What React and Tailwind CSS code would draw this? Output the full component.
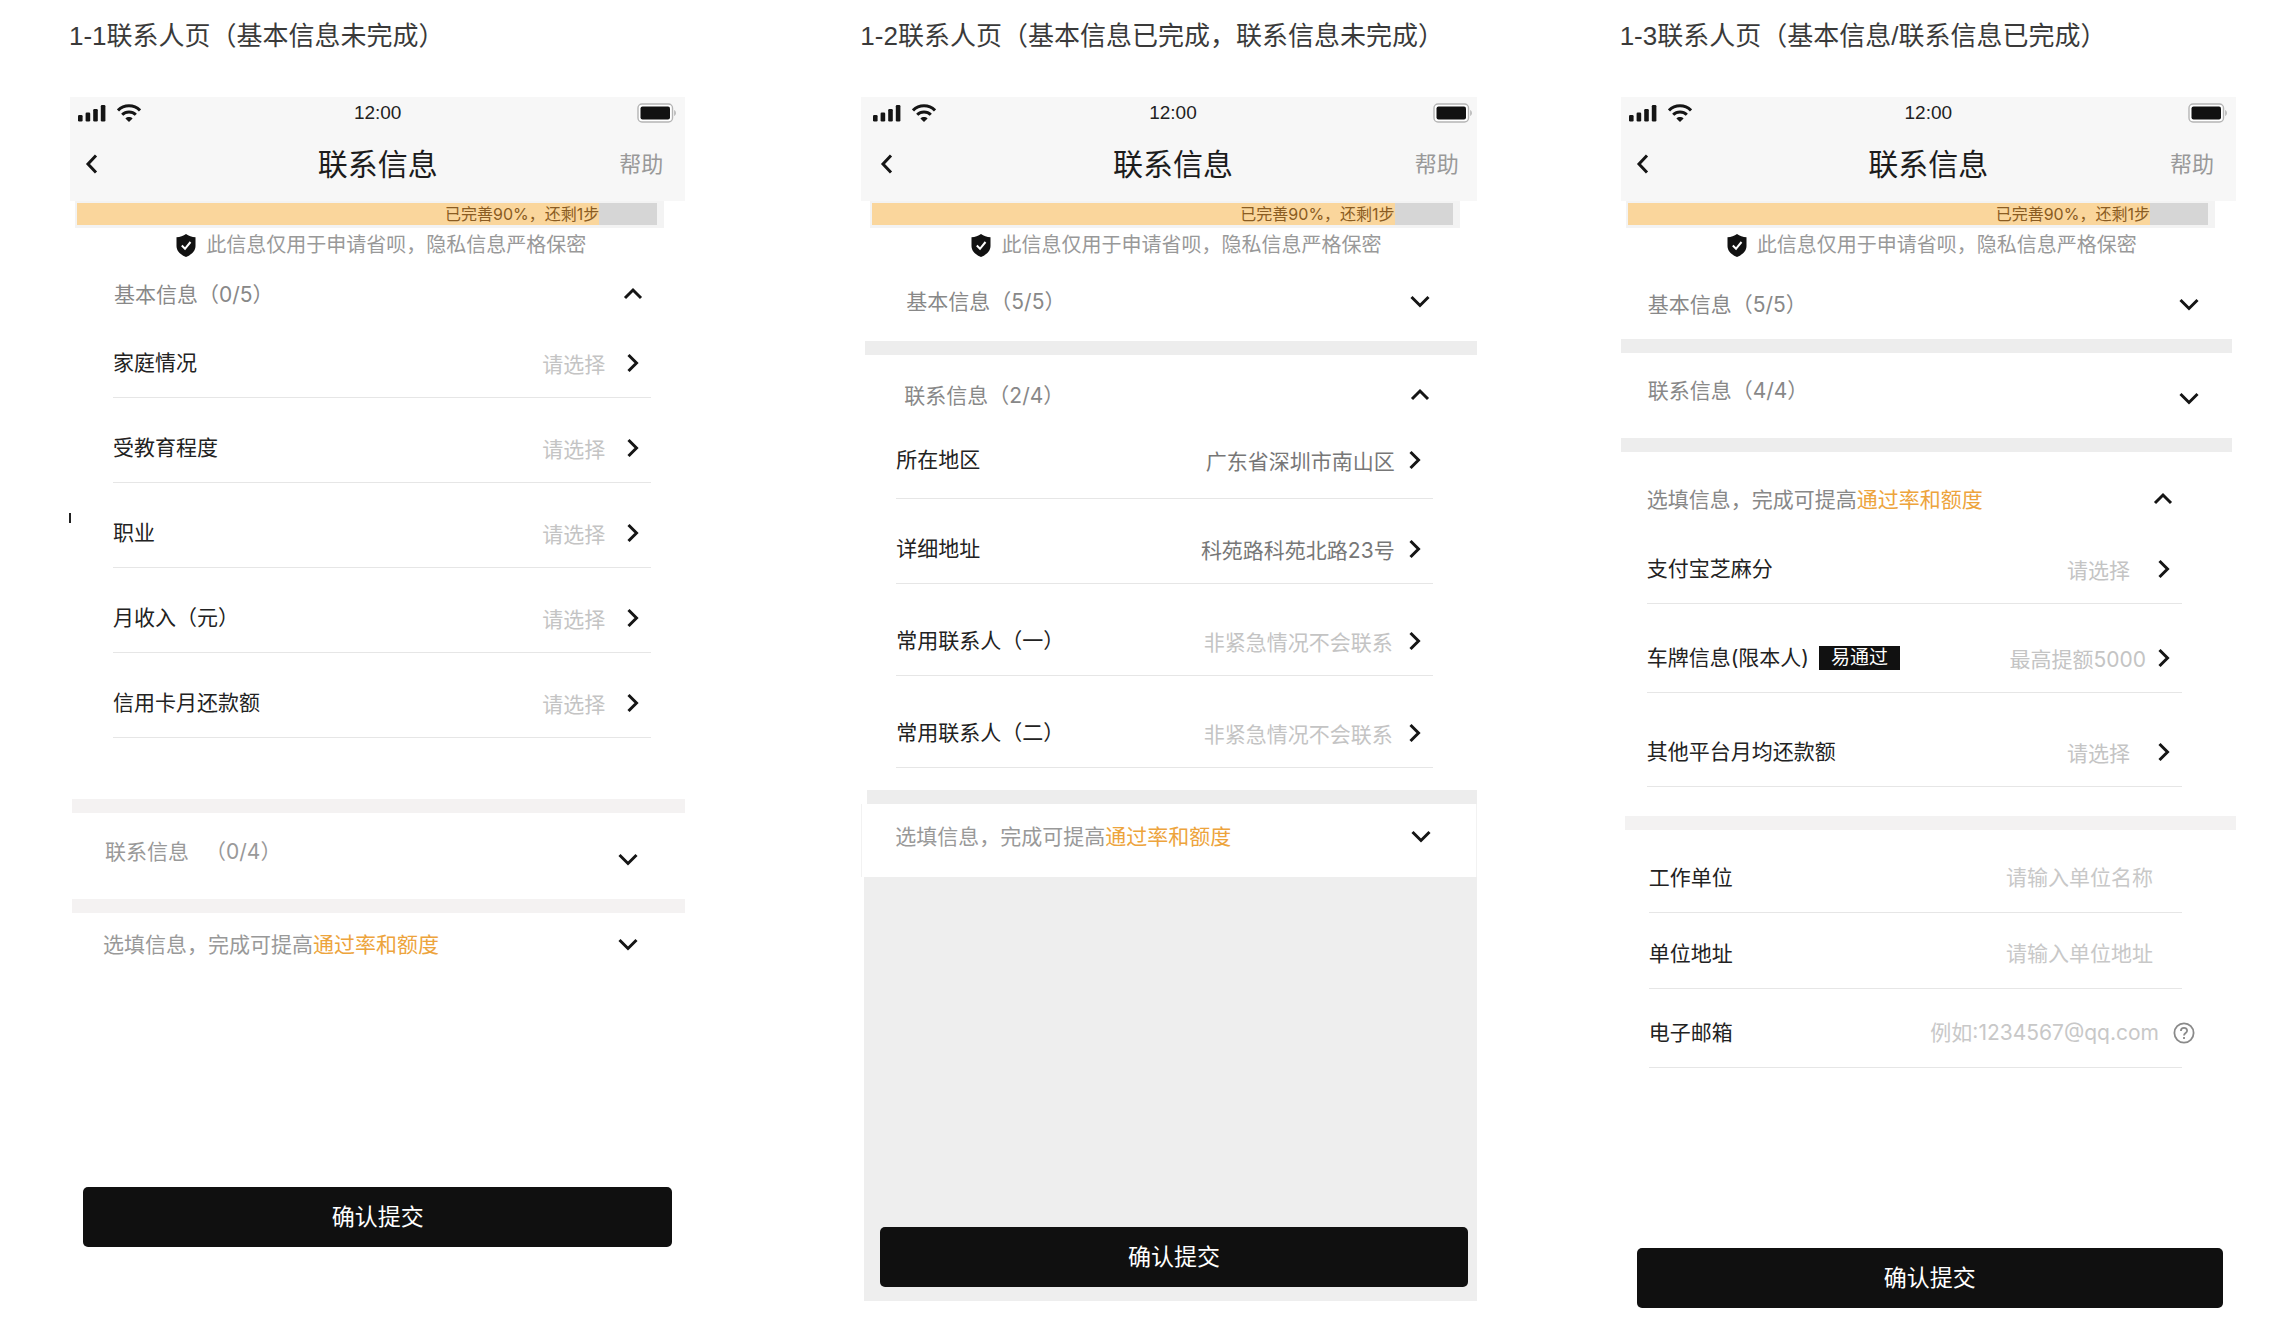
const CHEVRON_PATHS = {
  right: "M5.5 2 L13.5 10 L5.5 18",
  left: "M14 1.500 L6 10 L14 18.500",
  down: "M1.500 6 L10 14.5 L18.500 6",
  up: "M2 14 L10 6 L18 14",
};

function Chevron({ dir, className = "" }) {
  return (
    <svg viewBox="0 0 20 20" className={`h-5 w-5 shrink-0 ${className}`} fill="none" stroke="#151515" strokeWidth="3" aria-hidden="true">
      <path d={CHEVRON_PATHS[dir]} />
    </svg>
  );
}

function StatusBar() {
  return (
    <div className="grid grid-cols-3 items-center px-2 pt-[2px]">
      <div className="flex items-center gap-[11px]">
        <svg viewBox="0 0 28 18" className="h-[18px] w-7" fill="#151515" aria-label="信号">
          <rect x="0" y="11" width="4.6" height="6.5" rx="1.2" />
          <rect x="7.6" y="8.5" width="4.6" height="9" rx="1.2" />
          <rect x="15.2" y="5" width="4.6" height="12.5" rx="1.2" />
          <rect x="22.8" y="1" width="4.6" height="16.5" rx="1.2" />
        </svg>
        <svg viewBox="0 0 24 18" className="h-[18px] w-6" fill="none" stroke="#151515" strokeWidth="3" aria-label="无线网络">
          <path d="M1 6.4 C7 0.2 17 0.2 23 6.4" />
          <path d="M5.2 10.8 C9 7 15 7 18.8 10.8" />
          <path d="M12 18 L8.4 14.4 C10.4 12.5 13.6 12.5 15.6 14.4 Z" fill="#151515" stroke="none" />
        </svg>
      </div>
      <time className="text-center font-['Liberation_Sans'] text-[19px] leading-7 text-[#222]">12:00</time>
      <svg viewBox="0 0 40 20" className="h-5 w-10 justify-self-end" aria-label="电量">
        <rect x="1" y="1" width="34.5" height="18" rx="4" fill="#fff" stroke="#b5b5b5" strokeWidth="1.4" />
        <rect x="3.5" y="3.5" width="29.5" height="13" rx="2" fill="#111" />
        <path d="M37.2 7 C39.4 7.8 39.4 12.2 37.2 13 Z" fill="#b5b5b5" />
      </svg>
    </div>
  );
}

function PhoneHeader({ inset = "" }) {
  return (
    <>
      <header className="bg-[#f7f7f7] pb-[17px]">
        <div className={inset}>
          <StatusBar />
          <div className="grid grid-cols-3 items-center px-3 pt-[17px]">
            <button type="button" aria-label="返回" className="justify-self-start">
              <Chevron dir="left" />
            </button>
            <h2 className="text-center text-[30px] leading-10 text-[#1c1c1c]">联系信息</h2>
            <a href="#help" className="justify-self-end pr-[10px] text-[22px] leading-7 text-[#999]">帮助</a>
          </div>
        </div>
      </header>
      <div className={inset}>
        <div className="mr-[21px] ml-[5px] bg-[#f3f3f3] pt-[2px] pr-[7px] pb-[3px] pl-[2px]">
          <div className="bg-[#d6d6d6]" role="progressbar" aria-label="资料完善度" aria-valuenow={90} aria-valuemin={0} aria-valuemax={100}>
            <p className="w-[90%] bg-[#fad69c] text-right text-base leading-[22px] whitespace-nowrap text-[#8a5c22]">
              已完善90%，还剩1步
            </p>
          </div>
        </div>
        <p className="flex items-center justify-center gap-[10px] py-[3px] pl-[7px] text-xl leading-7 text-[#999]">
          <svg viewBox="0 0 20 23" className="h-[23px] w-5" aria-hidden="true">
            <path d="M10 0 C12.5 2 16 3 19.5 3.2 V12 C19.5 17 15.5 20.8 10 23 C4.500 20.8 0.5 17 0.5 12 V3.200 C4 3 7.500 2 10 0 Z" fill="#111" />
            <path d="M5.800 11.500 L9 14.800 L14.500 8" fill="none" stroke="#fff" strokeWidth="2" />
          </svg>
          此信息仅用于申请省呗，隐私信息严格保密
        </p>
      </div>
    </>
  );
}

function SectionHeader({ title, count, countClass = "", open, low, className, tone = "text-[#888]" }) {
  return (
    <button type="button" aria-expanded={Boolean(open)} className={`flex w-full items-start justify-between text-left text-[21px] leading-7 ${tone} ${className}`}>
      <span>
        {title}
        {count && <span className={countClass}>（{count}）</span>}
      </span>
      <Chevron dir={open ? "up" : "down"} className={low ? "mt-[11px]" : "mt-[3px]"} />
    </button>
  );
}

const OPTIONAL_TITLE = (
  <>
    选填信息，完成可提高<span className="text-[#eda43c]">通过率和额度</span>
  </>
);

function Divider({ className = "bg-[#ededed]" }) {
  return <div className={`h-3.5 ${className}`} />;
}

function SelectRow({ label, badge, value, filled, pad = "pt-9 pb-5", gap = "gap-[18px]" }) {
  return (
    <li className="border-b border-[#e6e6e6]">
      <button type="button" className={`flex w-full items-center justify-between pr-2 text-left text-[21px] leading-7 ${pad}`}>
        <span className="flex items-center gap-[10px] text-[#222]">
          {label}
          {badge && <span className="bg-[#111] px-3 text-[19px] leading-6 text-white">{badge}</span>}
        </span>
        <span className={`flex items-center ${gap}`}>
          <span className={`pt-1 leading-6 ${filled ? "text-[#777]" : "text-[#c4c4c4]"}`}>{value}</span>
          <Chevron dir="right" />
        </span>
      </button>
    </li>
  );
}

function InputRow({ id, label, placeholder, type = "text", pad = "pt-[27px]", help }) {
  return (
    <div className={`flex items-center justify-between border-b border-[#e6e6e6] pb-5 text-[21px] leading-7 ${pad}`}>
      <label htmlFor={id} className="shrink-0 text-[#222]">{label}</label>
      <div className={help ? "-mr-[13px] flex min-w-0 grow items-center gap-3.5" : "flex min-w-0 grow pr-[29px]"}>
        <input
          id={id}
          type={type}
          placeholder={placeholder}
          className="h-7 min-w-0 grow bg-transparent text-right leading-7 outline-none placeholder:text-[#c8c8c8]"
        />
        {help && (
          <button type="button" aria-label="邮箱说明" className="shrink-0">
            <svg viewBox="0 0 22 22" className="h-[22px] w-[22px]" fill="none" stroke="#8a8a8a" strokeWidth="1.800" aria-hidden="true">
              <circle cx="11" cy="11" r="9.600" />
              <path d="M7.900 9 C7.900 4.800 14.100 4.800 14.100 8.700 C14.100 11 11 11 11 13.600" />
              <path d="M11 15 V17" />
            </svg>
          </button>
        )}
      </div>
    </div>
  );
}

function SubmitButton({ className = "mx-[13px]" }) {
  return (
    <div className={`flex ${className}`}>
      <button type="submit" className="grow rounded-[5px] bg-[#101010] py-4 text-[23px] leading-7 text-white">
        确认提交
      </button>
    </div>
  );
}

function Mockup({ heading, inset, className = "", children }) {
  return (
    <section className={`relative min-w-0 flex-1 ${className}`}>
      <h1 className="-ml-px pt-4 pb-[41px] font-['Liberation_Sans','Noto_Sans_CJK_SC',sans-serif] text-[26px] leading-10 whitespace-nowrap text-[#3a3a3a]">
        {heading}
      </h1>
      <form onSubmit={(e) => e.preventDefault()}>
        <PhoneHeader inset={inset} />
        {children}
      </form>
    </section>
  );
}

export default function App() {
  return (
    <main className="flex min-h-screen items-start bg-white pr-[46px] pb-6 pl-[70px] font-['Inter','Noto_Sans_CJK_SC',sans-serif]">
      <Mockup heading="1-1联系人页（基本信息未完成）" className="mr-44">
        <span className="absolute top-[513px] left-0 h-[10px] w-[2px] -translate-x-px bg-[#222]" />
        <SectionHeader title="基本信息" count="0/5" open className="pt-[19px] pr-[42px] pb-1 pl-11" />
        <ul className="mr-[34px] ml-[43px]">
          <SelectRow label="家庭情况" value="请选择" />
          <SelectRow label="受教育程度" value="请选择" />
          <SelectRow label="职业" value="请选择" />
          <SelectRow label="月收入（元）" value="请选择" />
          <SelectRow label="信用卡月还款额" value="请选择" />
        </ul>
        <div className="pt-[61px]">
          <Divider className="ml-[2px] bg-[#f4f2f2]" />
        </div>
        <SectionHeader title="联系信息" count="0/4" countClass="ml-4" low tone="text-[#999]" className="pt-[25px] pr-[47px] pb-[30px] pl-[35px]" />
        <Divider className="ml-[2px] bg-[#f4f2f2]" />
        <SectionHeader title={OPTIONAL_TITLE} tone="text-[#999]" className="pt-[18px] pr-[47px] pl-[33px]" />
        <div className="pt-[228px]">
          <SubmitButton />
        </div>
      </Mockup>

      <Mockup heading="1-2联系人页（基本信息已完成，联系信息未完成）" inset="-mr-1 ml-1" className="mr-36">
        <SectionHeader title="基本信息" count="5/5" className="pt-[26px] pr-[47px] pb-[25px] pl-[45px]" />
        <Divider className="ml-1 bg-[#ededed]" />
        <SectionHeader title="联系信息" count="2/4" open className="pt-[27px] pr-[47px] pl-[43px]" />
        <ul className="mr-[44px] ml-[35px]">
          <SelectRow label="所在地区" value="广东省深圳市南山区" filled gap="gap-2.5" pad="pt-9 pb-6" />
          <SelectRow label="详细地址" value="科苑路科苑北路23号" filled gap="gap-2.5" />
          <SelectRow label="常用联系人（一）" value="非紧急情况不会联系" gap="gap-3" pad="pt-[43px] pb-5" />
          <SelectRow label="常用联系人（二）" value="非紧急情况不会联系" gap="gap-3" pad="pt-[43px] pb-5" />
        </ul>
        <div className="pt-[22px]">
          <Divider className="ml-[6px] bg-[#ededed]" />
        </div>
        <SectionHeader title={OPTIONAL_TITLE} tone="text-[#999]" className="border-x border-[#f2f2f2] pt-[19px] pr-[45px] pb-[26px] pl-[33px]" />
        <div className="ml-[3px] bg-[#eee] pt-[350px] pb-[14px]">
          <SubmitButton className="mr-[9px] ml-4" />
        </div>
      </Mockup>

      <Mockup heading="1-3联系人页（基本信息/联系信息已完成）">
        <SectionHeader title="基本信息" count="5/5" className="pt-[29px] pr-[37px] pb-5 pl-[27px]" />
        <Divider className="mr-1 bg-[#ededed]" />
        <SectionHeader title="联系信息" count="4/4" low className="pt-6 pr-[37px] pb-[30px] pl-[27px]" />
        <Divider className="mr-1 bg-[#ededed]" />
        <SectionHeader title={OPTIONAL_TITLE} open className="pt-[34px] pr-[63px] pb-px pl-[26px]" />
        <ul className="mr-[54px] ml-[26px]">
          <SelectRow label="支付宝芝麻分" value="请选择" gap="gap-6" pad="pt-10 pb-5" />
          <SelectRow label="车牌信息(限本人)" badge="易通过" value="最高提额5000" gap="gap-2" pad="pt-10 pb-5" />
          <SelectRow label="其他平台月均还款额" value="请选择" gap="gap-6" pad="pt-[45px] pb-5" />
        </ul>
        <div className="pt-[29px]">
          <Divider className="ml-1 bg-[#f3f2f2]" />
        </div>
        <div className="mr-[54px] ml-[28px] pt-[7px]">
          <InputRow id="company" label="工作单位" placeholder="请输入单位名称" />
          <InputRow id="company-address" label="单位地址" placeholder="请输入单位地址" />
          <InputRow id="email" type="email" label="电子邮箱" placeholder="例如:1234567@qq.com" pad="pt-[30px]" help />
        </div>
        <div className="pt-[180px]">
          <SubmitButton className="mr-[13px] ml-4" />
        </div>
      </Mockup>
    </main>
  );
}
